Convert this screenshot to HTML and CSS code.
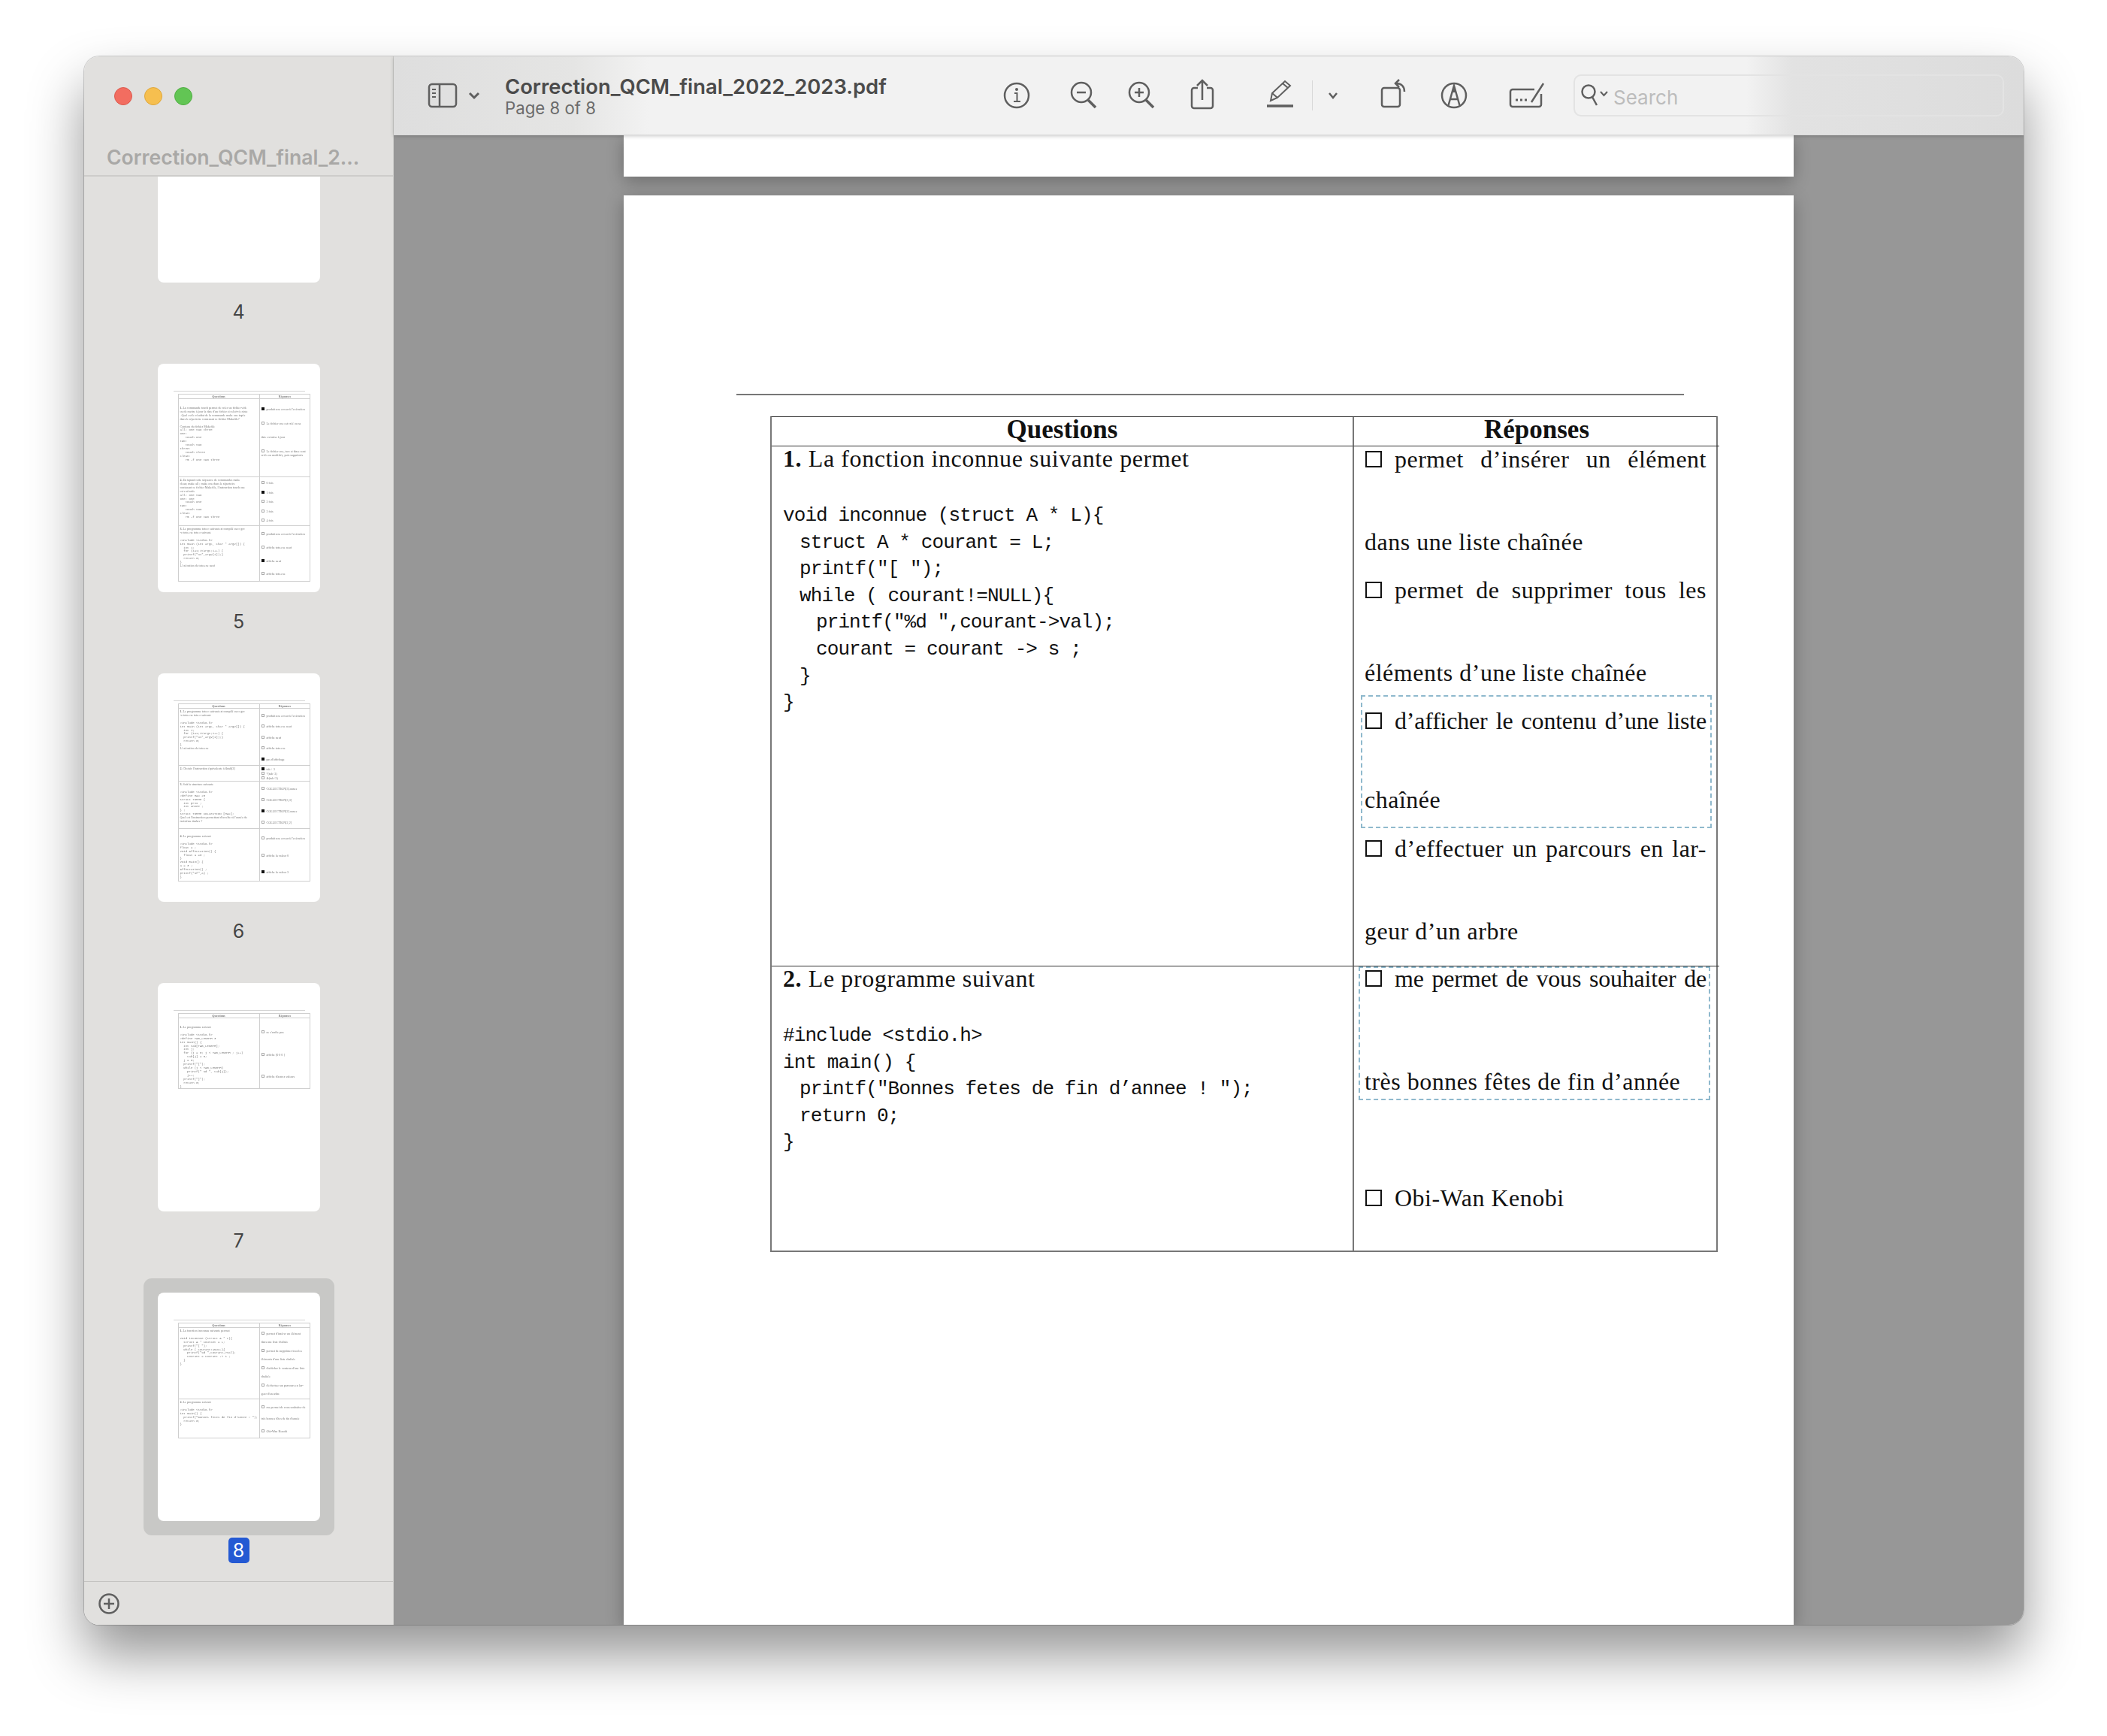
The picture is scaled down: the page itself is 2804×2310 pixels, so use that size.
FILE: index.html
```html
<!DOCTYPE html>
<html lang="fr">
<head>
    <meta charset="UTF-8">
    <title>Correction_QCM_final_2022_2023.pdf</title>
    <link rel="stylesheet" href="styles.css">
</head>
<body>
    <div class="window">

        <aside class="sidebar">
            <div class="side-head">
                <div class="lights">
                    <span class="light red"></span>
                    <span class="light yellow"></span>
                    <span class="light green"></span>
                </div>
                <div class="side-title">Correction_QCM_final_2...</div>
            </div>

            <div class="thumbs">
                <div class="thumb">
                    <div class="thumb-page cut"></div>
                    <div class="thumb-label"><span>4</span></div>
                </div>

                <div class="thumb">
                    <div class="thumb-page">
                        <div class="mini-rule"></div>
                        <div class="mini t5">
                            <div class="mh">Questions</div><div class="mh">Réponses</div>
                            <div class="mq pad"><b>1.</b> La commande touch permet de créer un fichier vide
ou de mettre à jour la date d'un fichier si celui-ci existe
. Quel est le résultat de la commande make one tapée
dans le répertoire contenant ce fichier Makefile?

Contenu du fichier Makefile
<code>all: one two three
one:
   touch one
two:
   touch two
three:
   touch three
clean:
   rm -f one two three</code></div>
                            <div class="ma pad"><p><i class="on"></i>produit une erreur à l'exécution</p><p><i></i>Le fichier one est créé ou sa</p><p>date est mise à jour</p><p><i></i>Le fichier one, two et three sont<br>créés ou modifiés, puis supprimés</p><p>&nbsp;</p></div>
                            <div class="mq"><b>2.</b> En tapant cette séquence de commandes make
clean; make all ; make one dans le répertoire
contenant ce fichier Makefile, l'instruction touch one
est exécutée
<code>all: one two
one: one
   touch one
two:
   touch two
clean:
   rm -f one two three</code></div>
                            <div class="ma"><p><i></i>0 fois</p><p><i class="on"></i>1 fois</p><p><i></i>2 fois</p><p><i></i>3 fois</p><p><i></i>4 fois</p></div>
                            <div class="mq"><b>3.</b> Le programme toto.c suivant est compilé avec gcc
-o toto.exe toto.c suivant.

<code>#include &lt;stdio.h&gt;
int main (int argc, char * argv[]) {
  int i;
  for (i=1;i&lt;argc;i++) {
  printf("%s",argv[i]);}
  return 0;
}</code>
L'exécution de toto.exe neuf</div>
                            <div class="ma"><p><i></i>produit une erreur à l'exécution</p><p><i></i>affiche toto.exe neuf</p><p><i class="on"></i>affiche neuf</p><p><i></i>affiche toto.exe</p></div>
                        </div>
                    </div>
                    <div class="thumb-label"><span>5</span></div>
                </div>

                <div class="thumb">
                    <div class="thumb-page">
                        <div class="mini-rule"></div>
                        <div class="mini t6">
                            <div class="mh">Questions</div><div class="mh">Réponses</div>
                            <div class="mq"><b>1.</b> Le programme toto.c suivant est compilé avec gcc
-o toto.exe toto.c suivant.

<code>#include &lt;stdio.h&gt;
int main (int argc, char * argv[]) {
  int i;
  for (i=1;i&lt;argc;i++) {
  printf("%s",argv[i]);}
  return 0;
}</code>
L'exécution de toto.exe</div>
                            <div class="ma"><p><i></i>produit une erreur à l'exécution</p><p><i></i>affiche toto.exe neuf</p><p><i></i>affiche neuf</p><p><i></i>affiche toto.exe</p><p><i class="on"></i>pas d'affichage</p></div>
                            <div class="mq"><b>2.</b> Choisir l'instruction équivalente à &amp;tab[3]</div>
                            <div class="ma"><p><i class="on"></i>tab + 3</p><p><i></i>*(tab+3)</p><p><i></i>&amp;(tab+3)</p></div>
                            <div class="mq"><b>3.</b> Soit la structure suivante

<code>#include &lt;stdio.h&gt;
#define MAX 20
struct TOMME {
  int prix ;
  int annee ;
} ;
struct TOMME COLLECTION [MAX];</code>
Quel est l'instruction permettant d'accéder à l'année du
troisième timbre ?</div>
                            <div class="ma"><p><i></i>COLLECTION[3].annee</p><p><i></i>COLLECTION[3,3]</p><p><i class="on"></i>COLLECTION[2].annee</p><p><i></i>COLLECTION[2,2]</p></div>
                            <div class="mq pad-s"><b>4.</b> Le programme suivant

<code>#include &lt;stdio.h&gt;
float a ;
void Affectation() {
  float a =0 ;
}
void main() {
a = 3 ;
Affectation() ;
printf("%f",a) ;
}</code></div>
                            <div class="ma"><p><i></i>produit une erreur à l'exécution</p><p><i></i>affiche la valeur 0</p><p><i class="on"></i>affiche la valeur 3</p></div>
                        </div>
                    </div>
                    <div class="thumb-label"><span>6</span></div>
                </div>

                <div class="thumb">
                    <div class="thumb-page">
                        <div class="mini-rule"></div>
                        <div class="mini t7">
                            <div class="mh">Questions</div><div class="mh">Réponses</div>
                            <div class="mq pad"><b>1.</b> Le programme suivant

<code>#include &lt;stdio.h&gt;
#define TAB_LENGTH 3
int main() {
  int tab[TAB_LENGTH];
  int j;
  for (j = 0; j &lt; TAB_LENGTH ; j++)
    tab[j] = 0;
  j = 0;
  printf("[");
  while (j &lt; TAB_LENGTH)
    printf(" %d ", tab[j]);
    j++;
  printf("]");
  return 0;
}</code></div>
                            <div class="ma pad"><p><i></i>ne s'arrête pas</p><p><i></i>affiche [0 0 0 ]</p><p><i></i>affiche d'autres valeurs</p></div>
                        </div>
                    </div>
                    <div class="thumb-label"><span>7</span></div>
                </div>

                <div class="thumb current">
                    <div class="thumb-page">
                        <div class="mini-rule"></div>
                        <div class="mini t8">
                            <div class="mh">Questions</div><div class="mh">Réponses</div>
                            <div class="mq"><b>1.</b> La fonction inconnue suivante permet

<code>void inconnue (struct A * L){
  struct A * courant = L;
  printf("[ ");
  while ( courant!=NULL){
    printf("%d ",courant-&gt;val);
    courant = courant -&gt; s ;
  }
}</code></div>
                            <div class="ma just"><p><i></i>permet d'insérer un élément</p><p>dans une liste chaînée</p><p><i></i>permet de supprimer tous les</p><p>éléments d'une liste chaînée</p><p><i></i>d'afficher le contenu d'une liste</p><p>chaînée</p><p><i></i>d'effectuer un parcours en lar-</p><p>geur d'un arbre</p></div>
                            <div class="mq"><b>2.</b> Le programme suivant

<code>#include &lt;stdio.h&gt;
int main() {
  printf("Bonnes fetes de fin d'annee ! ");
  return 0;
}</code></div>
                            <div class="ma"><p><i></i>me permet de vous souhaiter de</p><p>très bonnes fêtes de fin d'année</p><p><i></i>Obi-Wan Kenobi</p></div>
                        </div>
                    </div>
                    <div class="thumb-label"><span>8</span></div>
                </div>
            </div>

            <div class="side-foot">
                <svg class="icon" width="30" height="30" viewBox="0 0 30 30"><circle cx="15" cy="15" r="12.5"/><path d="M15 8v14M8 15h14"/></svg>
            </div>
        </aside>

        <div class="main">
            <header class="toolbar">
                <svg class="icon tb-toggle" width="48" height="48" viewBox="0 0 48 48"><rect x="6" y="9" width="36" height="30" rx="4"/><path d="M20 9v30"/><path d="M10 16h5M10 21h5M10 26h5" stroke-width="2"/></svg>
                <svg class="icon tb-chev" width="16" height="48" viewBox="0 0 16 48"><path d="M2 21l6 6 6-6" stroke-width="3"/></svg>
                <div class="doc-info">
                    <div class="doc-name">Correction_QCM_final_2022_2023.pdf</div>
                    <div class="doc-page">Page 8 of 8</div>
                </div>
                <svg class="icon tb-info" width="48" height="48" viewBox="0 0 48 48"><circle cx="24" cy="24" r="16"/><path d="M21 21h3.5v11M20 32h9" stroke-width="2"/><circle class="dot" cx="24" cy="16" r="2"/></svg>
                <svg class="icon tb-zoomout" width="48" height="48" viewBox="0 0 48 48"><circle cx="24" cy="20" r="13"/><path d="M33 30l10 10" stroke-width="3.5"/><path d="M18 20h12"/></svg>
                <svg class="icon tb-zoomin" width="48" height="48" viewBox="0 0 48 48"><circle cx="24" cy="20" r="13"/><path d="M33 30l10 10" stroke-width="3.5"/><path d="M18 20h12M24 14v12"/></svg>
                <svg class="icon tb-share" width="48" height="48" viewBox="0 0 48 48"><path d="M18 14h-5a3 3 0 0 0-3 3v21a3 3 0 0 0 3 3h22a3 3 0 0 0 3-3V17a3 3 0 0 0-3-3h-5"/><path d="M24 30V4M17 11l7-7 7 7"/></svg>
                <svg class="icon tb-pen" width="48" height="48" viewBox="0 0 48 48"><path d="M12 31l2-10L31 5l7 6-17 16z" stroke-width="2"/><path d="M14 21l7 6M28 8l7 6" stroke-width="2"/><path d="M7 38h35" stroke-width="3.5"/></svg>
                <span class="tb-sep"></span>
                <svg class="icon tb-chev2" width="16" height="48" viewBox="0 0 16 48"><path d="M3 21l5 6 5-6"/></svg>
                <svg class="icon tb-rotate" width="48" height="48" viewBox="0 0 48 48"><rect x="9" y="14" width="24" height="25" rx="3"/><path d="M39 19c0-7-4-11-11-11M32 3l-5 5 5 5"/></svg>
                <svg class="icon tb-circle" width="48" height="48" viewBox="0 0 48 48"><circle cx="24" cy="24" r="16"/><path d="M16 39l8-28 8 28M19 29h10"/><path class="dot" d="M21 20h6l-3-9z"/></svg>
                <svg class="icon tb-sign" width="48" height="48" viewBox="0 0 48 48"><path d="M34 16H5a3 3 0 0 0-3 3v17a3 3 0 0 0 3 3h35a3 3 0 0 0 3-3V22"/><path d="M30 33L46 8"/><path d="M9 30h3M15 30h3M21 30h3" stroke-width="3"/></svg>
                <div class="search">
                    <svg class="icon search-icon" width="42" height="36" viewBox="0 0 42 36"><circle cx="12" cy="13" r="8.5"/><path d="M17 20l6 11" stroke-width="2.5"/><path d="M28 13l4.5 5 4.5-5" stroke-width="2"/></svg>
                    <span>Search</span>
                </div>
            </header>

            <div class="viewer">
                <div class="pdf-page prev"></div>
                <div class="pdf-page">
                    <div class="rule"></div>
                    <div class="qcm">
                        <div class="qcm-head">Questions</div>
                        <div class="qcm-head rep">Réponses</div>

                        <div class="qcm-q">
                            <p class="q-title"><b>1.</b> La fonction inconnue suivante permet</p>
<pre class="code">void inconnue (struct A * L){
	struct A * courant = L;
	printf("[ ");
	while ( courant!=NULL){
		printf("%d ",courant-&gt;val);
		courant = courant -&gt; s ;
	}
}</pre>
                        </div>
                        <div class="qcm-a">
                            <div class="opt">
                                <div class="opt-line"><span class="box"></span><span class="txt just">permet d’insérer un élément</span></div>
                                <div class="opt-next">dans une liste chaînée</div>
                            </div>
                            <div class="opt">
                                <div class="opt-line"><span class="box"></span><span class="txt just">permet de supprimer tous les</span></div>
                                <div class="opt-next">éléments d’une liste chaînée</div>
                            </div>
                            <div class="opt marked m1">
                                <div class="opt-line"><span class="box"></span><span class="txt just">d’afficher le contenu d’une liste</span></div>
                                <div class="opt-next short">chaînée</div>
                            </div>
                            <div class="opt">
                                <div class="opt-line"><span class="box"></span><span class="txt just">d’effectuer un parcours en lar-</span></div>
                                <div class="opt-next">geur d’un arbre</div>
                            </div>
                        </div>

                        <div class="qcm-q line">
                            <p class="q-title"><b>2.</b> Le programme suivant</p>
<pre class="code">#include &lt;stdio.h&gt;
int main() {
	printf("Bonnes fetes de fin d’annee ! ");
	return 0;
}</pre>
                        </div>
                        <div class="qcm-a line">
                            <div class="opt marked m2">
                                <div class="opt-line"><span class="box"></span><span class="txt just">me permet de vous souhaiter de</span></div>
                                <div class="opt-next tall">très bonnes fêtes de fin d’année</div>
                            </div>
                            <div class="opt obi">
                                <div class="opt-line"><span class="box"></span><span class="txt">Obi-Wan Kenobi</span></div>
                            </div>
                        </div>
                    </div>
                </div>
            </div>
        </div>
    </div>
</body>
</html>
```

FILE: styles.css
```css
* {
    box-sizing: border-box;
}

html, body {
    margin: 0;
    height: 2310px;
    overflow: hidden;
    background-color: #fff;
}

body {
    padding: 75px 111px 0 112px;
    font-family: Inter, "Liberation Sans", sans-serif;
}

.window {
    position: relative;
    display: flex;
    width: 2581px;
    height: 2087px;
    border-radius: 20px;
    overflow: hidden;
    box-shadow: 0 0 0 1px rgba(0, 0, 0, 0.18);
}

body::before {
    content: "";
    position: absolute;
    left: 112px;
    top: 75px;
    width: 2581px;
    height: 2087px;
    border-radius: 20px;
    box-shadow: 0 40px 72px rgba(0, 0, 0, 0.42);
}

/* sidebar */
.sidebar {
    display: flex;
    flex-direction: column;
    flex: 0 0 412px;
    background-color: #e1e0de;
    border-right: 1px solid #cfcfcd;
}

.side-head {
    flex: 0 0 160px;
    padding: 41px 0 0 40px;
    border-bottom: 2px solid #cdccca;
}

.lights {
    display: flex;
    gap: 16px;
}

.light {
    width: 24px;
    height: 24px;
    border-radius: 50%;
}

.red { background-color: #f26d60; border: 1px solid #dc5a4e; }
.yellow { background-color: #f6bf4f; border: 1px solid #dfa73b; }
.green { background-color: #62c554; border: 1px solid #50ad43; }

.side-title {
    margin: 54px 0 0 -10px;
    font-size: 26.6px;
    line-height: 30px;
    font-weight: 600;
    color: #a9a8a6;
    white-space: nowrap;
}

.thumbs {
    flex: 1;
    overflow: hidden;
    isolation: isolate;
    display: flex;
    flex-direction: column;
    align-items: center;
}

.thumb-page {
    position: relative;
    width: 216px;
    height: 304px;
    padding-top: 36px;
    background-color: #fff;
    border-radius: 8px;
}

.thumb-page.cut {
    height: 141px;
    padding-top: 0;
    border-radius: 0 0 8px 8px;
}

.thumb-label {
    display: flex;
    justify-content: center;
    align-items: center;
    height: 34px;
    margin: 22px 0 52px;
    font-size: 25px;
    color: #444;
}

.current .thumb-page::before {
    content: "";
    position: absolute;
    inset: -19px;
    z-index: -1;
    border-radius: 11px;
    background-color: #c8c8c6;
}

.current .thumb-label span {
    display: flex;
    justify-content: center;
    align-items: center;
    width: 28px;
    height: 34px;
    border-radius: 5px;
    background-color: #2459d3;
    color: #fff;
}

.side-foot {
    flex: 0 0 58px;
    display: flex;
    align-items: center;
    padding-left: 18px;
    border-top: 1px solid #c4c3c1;
}

/* miniature tables in the thumbnails */
.mini-rule {
    width: 175px;
    height: 1px;
    margin-left: 21px;
    background-color: #d4d4d4;
}

.mini {
    display: grid;
    grid-template-columns: 108px 68px;
    width: 176px;
    margin: 3px 0 0 27px;
    border-right: 1px solid #cfcfcf;
    border-bottom: 1px solid #cfcfcf;
    font-family: "Liberation Serif", serif;
    font-size: 4.1px;
    line-height: 4.9px;
    color: #777;
    filter: blur(0.3px);
}

.t5 { grid-template-rows: 6px 104px 65px 74px; }
.t6 { grid-template-rows: 6px 76px 21px 63px 70px; }
.t7 { grid-template-rows: 6px 94px; }
.t8 { grid-template-rows: 6px 95px 52px; }

.mh, .mq, .ma {
    border-top: 1px solid #cfcfcf;
    border-left: 1px solid #cfcfcf;
    padding: 2px 2px 0;
}

.mh {
    padding: 0;
    text-align: center;
    font-weight: bold;
    line-height: 5px;
}

.mq {
    white-space: pre;
}

.mq code {
    font-family: "Liberation Mono", monospace;
    font-size: 4px;
}

.mq.pad { padding-top: 10px; }
.mq.pad-s { padding-top: 8px; }

.ma {
    display: flex;
    flex-direction: column;
    justify-content: space-around;
    white-space: nowrap;
}

.ma.pad {
    padding-top: 4px;
}

.ma p {
    margin: 0;
}

.ma i {
    display: inline-block;
    width: 4px;
    height: 4px;
    margin-right: 3px;
    border: 0.5px solid #aaa;
    vertical-align: -0.5px;
}

.ma i.on {
    border-color: #111;
    background-color: #111;
}

/* toolbar */
.main {
    flex: 1;
    display: flex;
    flex-direction: column;
    min-width: 0;
}

.toolbar {
    position: relative;
    z-index: 2;
    flex: 0 0 105px;
    display: flex;
    align-items: center;
    padding-left: 41px;
    background: linear-gradient(90deg, #dedede 0, #e5e5e4 240px, #f2f2f2 340px, #f2f2f2 1800px, #e2e2e2 1862px, #dcdcdc 100%);
    border-bottom: 1px solid #dadada;
    box-shadow: 0 1px 5px rgba(0, 0, 0, 0.22);
}

.icon {
    flex: none;
    fill: none;
    stroke: #5f5f5f;
    stroke-width: 2.5;
}

.icon .dot {
    fill: #5f5f5f;
    stroke: none;
}

.tb-chev { margin-left: 10px; }
.tb-info { margin-left: 137px; }
.tb-zoomout { margin-left: 38px; }
.tb-zoomin { margin-left: 29px; }
.tb-share { margin-left: 36px; }
.tb-pen { margin-left: 55px; }
.tb-chev2 { margin-left: 19px; }
.tb-rotate { margin-left: 48px; }
.tb-circle { margin-left: 33px; }
.tb-sign { margin-left: 49px; }

.tb-sep {
    width: 1px;
    height: 40px;
    margin-left: 19px;
    background-color: #d8d8d8;
}

.doc-info {
    width: 520px;
    margin-left: 33px;
    padding-top: 2px;
}

.doc-name {
    font-size: 27.4px;
    line-height: 32px;
    font-weight: 600;
    color: #4b4b4b;
    white-space: nowrap;
}

.doc-page {
    font-size: 22.2px;
    line-height: 26px;
    color: #6b6b6b;
}

.search {
    display: flex;
    align-items: center;
    width: 573px;
    height: 56px;
    margin-left: 38px;
    padding-left: 6px;
    border: 2px solid #e3e3e3;
    border-radius: 10px;
    font-size: 26px;
    color: #bcbcbc;
}

.search-icon {
    margin-right: 3px;
}

.search span {
    padding-top: 5px;
}

/* document area */
.viewer {
    flex: 1;
    overflow: hidden;
    display: flex;
    flex-direction: column;
    align-items: center;
    gap: 25px;
    margin-top: -1px;
    background-color: #979797;
}

.pdf-page {
    flex: none;
    width: 1557px;
    height: 1902px;
    padding-top: 264px;
    background-color: #fff;
    box-shadow: 0 6px 22px rgba(0, 0, 0, 0.28);
}

.pdf-page.prev {
    height: 56px;
    padding: 0;
}

.rule {
    width: 1261px;
    height: 2px;
    margin-left: 150px;
    background-color: #777;
}

.qcm {
    display: grid;
    grid-template-columns: 773px 488px;
    grid-template-rows: 39px 691px 379px;
    width: 1261px;
    margin: 28px 0 0 195px;
    border: 2px solid #777;
    border-top: 1px solid #333;
    font-family: "Liberation Serif", serif;
    font-size: 32px;
    line-height: 36px;
    color: #111;
}

.qcm-head {
    text-align: center;
    font-size: 35px;
    line-height: 33px;
    font-weight: bold;
    border-bottom: 1px solid #333;
}

.qcm-head.rep,
.qcm-a {
    border-left: 2px solid #777;
}

.qcm-q {
    padding-left: 15px;
}

.q-title {
    margin: 0;
    line-height: 32px;
    letter-spacing: 0.6px;
}

.code {
    margin: 43px 0 0;
    font-family: "Liberation Mono", monospace;
    font-size: 26px;
    line-height: 35.6px;
    letter-spacing: -0.9px;
    tab-size: 22px;
}

.qcm-a {
    padding: 0 17px 0 14px;
}

.line {
    border-top: 1px solid #333;
}

.opt + .opt {
    margin-top: 29px;
}

.opt-line {
    display: flex;
    align-items: center;
    margin-top: -1px;
}

.box {
    flex: none;
    width: 22px;
    height: 22px;
    margin: 0 17px 0 1px;
    border: 2px solid #111;
}

.txt {
    flex: 1;
    white-space: nowrap;
    letter-spacing: 0.5px;
}

.txt.just {
    white-space: normal;
    text-align: justify;
    text-align-last: justify;
}

.marked .txt.just {
    letter-spacing: -0.2px;
}

.opt-next {
    margin-top: 74px;
    letter-spacing: 0.5px;
}

.opt-next.short {
    margin-top: 69px;
}

.opt-next.tall {
    margin-top: 101px;
}

.marked {
    border: 2px dashed #8fb9cd;
}

.opt + .marked.m1 {
    margin: 12px -7px -20px -5px;
    padding: 15px 5px 18px 3px;
}

.marked.m2 {
    margin: 0 -5px 0 -8px;
    padding: 0 3px 5px 6px;
}

.m2 .opt-line {
    margin-top: -4px;
}

.opt + .opt.obi {
    margin-top: 113px;
}
```
